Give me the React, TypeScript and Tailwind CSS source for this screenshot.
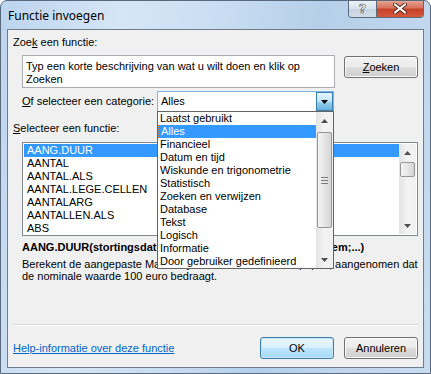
import React from 'react';

const ui = { fontFamily: '"Liberation Sans", Arial, sans-serif' };

const functions = ['AANG.DUUR', 'AANTAL', 'AANTAL.ALS', 'AANTAL.LEGE.CELLEN', 'AANTALARG', 'AANTALLEN.ALS', 'ABS'];

const categories = [
  'Laatst gebruikt',
  'Alles',
  'Financieel',
  'Datum en tijd',
  'Wiskunde en trigonometrie',
  'Statistisch',
  'Zoeken en verwijzen',
  'Database',
  'Tekst',
  'Logisch',
  'Informatie',
  'Door gebruiker gedefinieerd',
];

function Arrow({ up }: { up?: boolean }) {
  return (
    <svg width="7" height="4" viewBox="0 0 7 4">
      {up ? <path d="M0 4 L3.5 0 L7 4 Z" fill="#505050" /> : <path d="M0 0 L7 0 L3.5 4 Z" fill="#505050" />}
    </svg>
  );
}

function ScrollBar({ gap, thumb, grip }: { gap: string; thumb: string; grip?: boolean }) {
  return (
    <div className="flex h-full w-[17px] shrink-0 flex-col bg-gradient-to-r from-[#e3e3e3] via-[#f3f3f3] to-[#f0f0f0]">
      <div className="flex h-[17px] items-center justify-center">
        <Arrow up />
      </div>
      <div className="flex flex-1 flex-col">
        <div className={gap} />
        <div
          className={`mx-[1px] flex flex-col items-center justify-center gap-[2px] rounded-[2px] border border-[#979797] bg-gradient-to-r from-[#f3f3f3] via-[#e6e6e6] to-[#d4d4d4] ${thumb}`}
        >
          {grip && (
            <>
              <div className="h-[1px] w-[7px] bg-[#7a7a7a]" />
              <div className="h-[1px] w-[7px] bg-[#7a7a7a]" />
              <div className="h-[1px] w-[7px] bg-[#7a7a7a]" />
            </>
          )}
        </div>
      </div>
      <div className="flex h-[17px] items-center justify-center">
        <Arrow />
      </div>
    </div>
  );
}

function Button({ children, primary, className = '' }: { children: React.ReactNode; primary?: boolean; className?: string }) {
  return (
    <div
      className={`flex h-[22px] w-[74px] items-center justify-center rounded-[3px] border text-[11px] text-black ${
        primary
          ? 'border-[#3c7fb1] bg-[linear-gradient(#eaf6fd_0%,#d9f0fc_50%,#bee6fd_51%,#a7d9f5_100%)] shadow-[inset_0_0_0_1px_#c6e6f8]'
          : 'border-[#707070] bg-[linear-gradient(#f2f2f2_0%,#ebebeb_50%,#dddddd_51%,#cfcfcf_100%)] shadow-[inset_0_0_0_1px_#fbfbfb]'
      } ${className}`}
    >
      {children}
    </div>
  );
}

export default function App() {
  return (
    <div
      className="relative h-[374px] w-[431px] overflow-hidden rounded-t-[7px] border border-[#5a6a7c] bg-[linear-gradient(100deg,#bcd4ee_0%,#d6e6f6_25%,#c9ddf2_45%,#b5cfea_65%,#c8dcf1_100%)]"
      style={ui}
    >
      {/* title bar */}
      <div className="flex h-[28px] items-start justify-between">
        <span className="mt-[6px] ml-[7px] text-[12px] text-black" style={{ fontFamily: '"Noto Sans", "Liberation Sans", sans-serif' }}>
          Functie invoegen
        </span>
        <div className="mr-[6px] flex h-[18px] -mt-[1px] overflow-hidden rounded-b-[4px] border border-t-0 border-[#5c6a7a]">
          <div className="flex w-[28px] items-center justify-center border-r border-[#5c6a7a] bg-[linear-gradient(#eef3f9_0%,#dae4ef_50%,#c4d1df_51%,#d3dde9_100%)]">
            <span className="text-[13px] font-bold leading-none text-white [-webkit-text-stroke:0.6px_#4a5563]" style={{ fontFamily: '"DejaVu Sans", sans-serif' }}>
              ?
            </span>
          </div>
          <div className="flex w-[46px] items-center justify-center bg-[linear-gradient(#e9a99b_0%,#d7735e_45%,#c7432a_55%,#d6583c_100%)]">
            <svg width="14" height="11" viewBox="0 0 14 11">
              <path d="M2 1.5 L12 9.5 M12 1.5 L2 9.5" stroke="#5a2a22" strokeWidth="4" strokeLinecap="round" />
              <path d="M2 1.5 L12 9.5 M12 1.5 L2 9.5" stroke="#ffffff" strokeWidth="2.2" strokeLinecap="round" />
            </svg>
          </div>
        </div>
      </div>

      {/* client area */}
      <div className="relative mx-[6px] h-[339px] border border-[#6d7b8b] bg-[#f0f0f0] text-[11px] leading-[13px] text-black">
        <div className="mt-[6px] ml-[5px]">
          Zoe<span className="underline">k</span> een functie:
        </div>

        <div className="mt-[6px] ml-[14px] flex items-start">
          <div className="h-[33px] w-[313px] border border-[#abadb3] bg-white px-[3px] pt-[4px]">
            Typ een korte beschrijving van wat u wilt doen en klik op
            <br />
            Zoeken
          </div>
          <Button className="mt-[1px] ml-[9px]">
            <span>
              <span className="underline">Z</span>oeken
            </span>
          </Button>
        </div>

        <div className="mt-[3px] ml-[14px] flex items-center">
          <div className="w-[135px]">
            <span className="underline">O</span>f selecteer een categorie:
          </div>
          <div className="flex h-[21px] w-[177px] items-center border border-[#7eb4ea] bg-white pl-[3px]">
            <span className="flex-1">Alles</span>
            <div className="flex h-full w-[17px] items-center justify-center border border-[#3c7fb1] bg-[linear-gradient(#e5f4fc_0%,#c4e5f6_50%,#98d1ef_51%,#68b3db_100%)]">
              <svg width="7" height="4" viewBox="0 0 7 4">
                <path d="M0 0 L7 0 L3.5 4 Z" fill="#000" />
              </svg>
            </div>
          </div>
        </div>

        <div className="mt-[10px] ml-[5px]">
          <span className="underline">S</span>electeer een functie:
        </div>

        <div className="mt-[7px] ml-[14px] flex h-[94px] w-[396px] border border-[#828790] bg-white p-[1px]">
          <div className="flex-1">
            {functions.map((f, i) => (
              <div key={f} className={`h-[13px] pl-[3px] ${i === 0 ? 'bg-[#3399ff] text-white' : ''}`}>
                {f}
              </div>
            ))}
          </div>
          <ScrollBar gap="h-[1px]" thumb="h-[15px]" />
        </div>

        <div className="mt-[5px] ml-[14px] whitespace-nowrap font-bold">
          AANG.DUUR(stortingsdatum;vervaldatum;coupon;jaarrendem;...)
        </div>
        <div className="mt-[4px] ml-[14px] whitespace-nowrap leading-[12px]">
          Berekent de aangepaste Macauley-duur van een waardepapier, aangenomen dat
          <br />
          de nominale waarde 100 euro bedraagt.
        </div>

        <div className="mt-[42px] ml-[5px] mr-[5px] border-t border-b border-t-[#d9d9d9] border-b-white" />

        <div className="mt-[11px] ml-[5px] flex items-center">
          <span className="flex-1 text-[#0066cc] underline">Help-informatie over deze functie</span>
          <Button primary>OK</Button>
          <Button className="mr-[5px] ml-[10px]">Annuleren</Button>
        </div>

        {/* open category dropdown */}
        <div className="absolute top-[81px] left-[149px] flex h-[158px] w-[177px] border border-[#646464] bg-white">
          <div className="flex-1">
            {categories.map((c, i) => (
              <div
                key={c}
                className={`h-[13px] pl-[2px] whitespace-nowrap ${
                  i === 1 ? 'border border-dotted border-[#e07a1f] bg-[#3399ff] pl-[1px] leading-[11px] text-white' : ''
                }`}
              >
                {c}
              </div>
            ))}
          </div>
          <ScrollBar gap="h-[3px]" thumb="h-[96px]" grip />
        </div>
      </div>
    </div>
  );
}
